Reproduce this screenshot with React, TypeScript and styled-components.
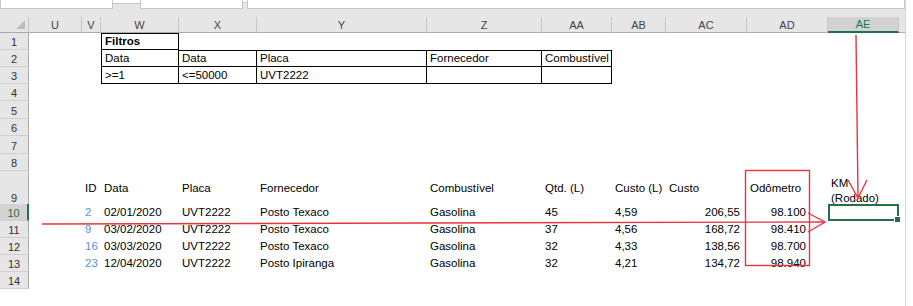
import styled, { createGlobalStyle } from 'styled-components';

const GREEN = '#217346';
const RED = '#e8343f';

// column widths: row header, U, V, W, X, Y, Z, AA, AB, AC, AD, AE, filler
const COLS = [29, 53, 19, 78, 78, 170, 115, 70, 54, 81, 81, 71, 6];
const TEMPLATE = COLS.map((w) => `${w}px`).join(' ');
const LETTERS = ['U', 'V', 'W', 'X', 'Y', 'Z', 'AA', 'AB', 'AC', 'AD', 'AE', ''];

const GlobalStyle = createGlobalStyle`
    html, body {
        margin: 0;
        padding: 0;
        background: #ffffff;
    }
    body {
        font-family: "Liberation Sans", Arial, sans-serif;
    }
`;

const Window = styled.div`
    position: relative;
    width: 913px;
    height: 306px;
    overflow: hidden;
    display: flex;
    background: #ffffff;
`;

const Workbook = styled.div`
    width: 905px;
    display: flex;
    flex-direction: column;
`;

const ScrollEdge = styled.div`
    flex: 1;
    border-left: 1px solid #d6d6d6;
    background: #ffffff;
`;

const TopStrip = styled.div`
    height: 9px;
    display: flex;
    align-items: flex-start;
    background: #e6e6e6;
`;

const FieldBox = styled.div<{ $w?: number; $h: number; $edges?: boolean }>`
    ${(p) => (p.$w ? `width: ${p.$w}px;` : 'flex: 1;')}
    height: ${(p) => p.$h}px;
    box-sizing: border-box;
    background: #ffffff;
    border-bottom: 1px solid #c6c6c6;
    ${(p) => (p.$edges ? 'border-left: 1px solid #c6c6c6; border-right: 1px solid #c6c6c6;' : '')}
`;

const HeaderBand = styled.div`
    background: #e6e6e6;
    padding-top: 8px;
`;

const GridRow = styled.div<{ $h: number }>`
    display: grid;
    grid-template-columns: ${TEMPLATE};
    height: ${(p) => p.$h}px;
`;

const Corner = styled.div`
    display: flex;
    align-items: flex-end;
    justify-content: flex-end;
    padding: 0 3px 3px 0;
    box-sizing: border-box;
    border-right: 1px solid #c6c6c6;
    border-bottom: 1px solid #ababab;
`;

const ColHead = styled.div<{ $selected?: boolean }>`
    display: flex;
    align-items: center;
    justify-content: center;
    box-sizing: border-box;
    font-size: 11px;
    color: ${(p) => (p.$selected ? GREEN : '#444444')};
    background: ${(p) => (p.$selected ? '#d2d2d2' : 'transparent')};
    border-right: 1px solid #c6c6c6;
    border-bottom: ${(p) => (p.$selected ? `2px solid ${GREEN}` : '1px solid #ababab')};
    &:last-child {
        border-right: none;
    }
`;

const RowHead = styled.div<{ $selected?: boolean }>`
    display: flex;
    align-items: flex-end;
    justify-content: center;
    padding-bottom: 1px;
    box-sizing: border-box;
    font-size: 11px;
    color: ${(p) => (p.$selected ? GREEN : '#333333')};
    background: ${(p) => (p.$selected ? '#d2d2d2' : '#e6e6e6')};
    border-bottom: 1px solid #cfcfcf;
    border-right: ${(p) => (p.$selected ? `2px solid ${GREEN}` : '1px solid #ababab')};
`;

const Cell = styled.div<{
    $align?: 'left' | 'right';
    $color?: string;
    $bold?: boolean;
    $b?: string;
    $pr?: number;
    $wrap?: boolean;
    $selected?: boolean;
}>`
    position: relative;
    display: flex;
    align-items: center;
    justify-content: ${(p) => (p.$align === 'right' ? 'flex-end' : 'flex-start')};
    box-sizing: border-box;
    padding: ${(p) => (p.$wrap ? '5px' : '0')} ${(p) => p.$pr ?? 3}px 0 3px;
    font-size: 11.5px;
    line-height: 15px;
    white-space: ${(p) => (p.$wrap ? 'normal' : 'nowrap')};
    overflow: visible;
    color: ${(p) => p.$color ?? '#000000'};
    font-weight: ${(p) => (p.$bold ? 700 : 400)};
    ${(p) => (p.$b?.includes('t') ? 'border-top: 1px solid #000;' : '')}
    ${(p) => (p.$b?.includes('l') ? 'border-left: 1px solid #000;' : '')}
    ${(p) => (p.$b?.includes('r') ? 'border-right: 1px solid #000;' : '')}
    ${(p) => (p.$b?.includes('b') ? 'border-bottom: 1px solid #000;' : '')}
    ${(p) =>
        p.$selected
            ? `
        border: 2px solid ${GREEN};
        z-index: 1;
        &::after {
            content: '';
            position: absolute;
            right: -4px;
            bottom: -4px;
            width: 5px;
            height: 5px;
            background: ${GREEN};
            border: 1px solid #ffffff;
        }
    `
            : ''}
`;

const Overlay = styled.svg`
    position: absolute;
    left: 0;
    top: 0;
    pointer-events: none;
    z-index: 2;
`;

type CellSpec = {
    text?: string;
    align?: 'left' | 'right';
    color?: string;
    bold?: boolean;
    b?: string;
    pr?: number;
    wrap?: boolean;
    selected?: boolean;
};

type RowSpec = { n: number; h: number; cells: Record<number, CellSpec>; selected?: boolean };

const ID_BLUE = '#5b8fd2';

const dataRow = (id: string, date: string, forn: string, qtd: string, custoL: string, custo: string, odo: string) => ({
    2: { text: id, color: ID_BLUE },
    3: { text: date },
    4: { text: 'UVT2222' },
    5: { text: forn },
    6: { text: 'Gasolina' },
    7: { text: qtd },
    8: { text: custoL },
    9: { text: custo, align: 'right' as const, pr: 7 },
    10: { text: odo, align: 'right' as const, pr: 22 },
});

const ROWS: RowSpec[] = [
    { n: 1, h: 17, cells: { 3: { text: 'Filtros', bold: true, b: 'tlrb' } } },
    {
        n: 2,
        h: 17,
        cells: {
            3: { text: 'Data', b: 'lrb' },
            4: { text: 'Data', b: 'trb' },
            5: { text: 'Placa', b: 'trb' },
            6: { text: 'Fornecedor', b: 'trb' },
            7: { text: 'Combustível', b: 'trb' },
        },
    },
    {
        n: 3,
        h: 17,
        cells: {
            3: { text: '>=1', b: 'lrb' },
            4: { text: '<=50000', b: 'rb' },
            5: { text: 'UVT2222', b: 'rb' },
            6: { b: 'rb' },
            7: { b: 'rb' },
        },
    },
    { n: 4, h: 17, cells: {} },
    { n: 5, h: 18, cells: {} },
    { n: 6, h: 17, cells: {} },
    { n: 7, h: 18, cells: {} },
    { n: 8, h: 17, cells: {} },
    {
        n: 9,
        h: 33,
        cells: {
            2: { text: 'ID' },
            3: { text: 'Data' },
            4: { text: 'Placa' },
            5: { text: 'Fornecedor' },
            6: { text: 'Combustível' },
            7: { text: 'Qtd. (L)' },
            8: { text: 'Custo (L)' },
            9: { text: 'Custo' },
            10: { text: 'Odômetro' },
            11: { text: 'KM (Rodado)', wrap: true },
        },
    },
    {
        n: 10,
        h: 17,
        selected: true,
        cells: { ...dataRow('2', '02/01/2020', 'Posto Texaco', '45', '4,59', '206,55', '98.100'), 11: { selected: true } },
    },
    { n: 11, h: 17, cells: dataRow('9', '03/02/2020', 'Posto Texaco', '37', '4,56', '168,72', '98.410') },
    { n: 12, h: 17, cells: dataRow('16', '03/03/2020', 'Posto Texaco', '32', '4,33', '138,56', '98.700') },
    { n: 13, h: 17, cells: dataRow('23', '12/04/2020', 'Posto Ipiranga', '32', '4,21', '134,72', '98.940') },
    { n: 14, h: 17, cells: {} },
];

export default function App() {
    return (
        <>
            <GlobalStyle />
            <Window>
                <Workbook>
                    <TopStrip>
                        <FieldBox $w={113} $h={9} $edges />
                        <FieldBox $w={27} $h={4} />
                        <FieldBox $w={103} $h={9} $edges />
                        <FieldBox $w={4} $h={3} />
                        <FieldBox $h={9} $edges />
                    </TopStrip>
                    <HeaderBand>
                        <GridRow $h={16}>
                            <Corner>
                                <svg width="9" height="9" viewBox="0 0 9 9">
                                    <polygon points="9,0 9,9 0,9" fill="#bdbdbd" />
                                </svg>
                            </Corner>
                            {LETTERS.map((l, i) => (
                                <ColHead key={i} $selected={l === 'AE'}>
                                    {l}
                                </ColHead>
                            ))}
                        </GridRow>
                    </HeaderBand>
                    {ROWS.map((row) => (
                        <GridRow key={row.n} $h={row.h}>
                            <RowHead $selected={row.selected}>{row.n}</RowHead>
                            {LETTERS.map((_, i) => {
                                const c = row.cells[i + 1] ?? {};
                                return (
                                    <Cell
                                        key={i}
                                        $align={c.align}
                                        $color={c.color}
                                        $bold={c.bold}
                                        $b={c.b}
                                        $pr={c.pr}
                                        $wrap={c.wrap}
                                        $selected={c.selected}
                                    >
                                        {c.text}
                                    </Cell>
                                );
                            })}
                        </GridRow>
                    ))}
                </Workbook>
                <ScrollEdge />
                <Overlay width="913" height="306" viewBox="0 0 913 306">
                    <g stroke={RED} strokeWidth="1.4" fill="none">
                        <line x1="856" y1="35" x2="858" y2="197" />
                        <polyline points="848,180 858,198 867,180" />
                        <line x1="42" y1="224" x2="825" y2="222" />
                        <polyline points="808,213 825,222 808,232" />
                        <rect x="745.5" y="170.5" width="64" height="95" />
                    </g>
                </Overlay>
            </Window>
        </>
    );
}
